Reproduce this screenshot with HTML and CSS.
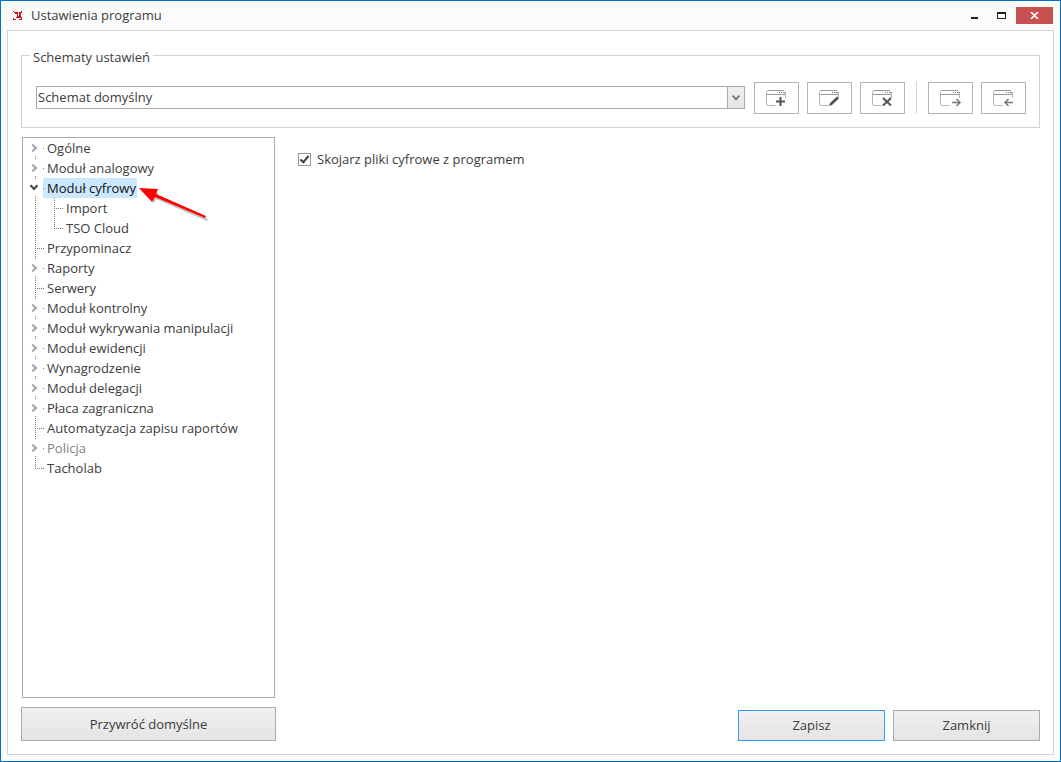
FILE: index.html
```html
<!DOCTYPE html>
<html lang="pl">
<head>
  <meta charset="utf-8">
  <title>Ustawienia programu</title>
  <link rel="stylesheet" href="styles.css">
</head>
<body>
  <!-- window frame shape shared by the toolbar icons -->
  <svg class="defs" width="0" height="0" aria-hidden="true">
    <symbol id="frame" viewBox="0 0 22 18">
      <path d="M9.500 16.500H2.500Q0.500 16.500 0.500 14.500V3.500Q0.500 1.500 2.500 1.500H18M19.500 3V9" fill="none" stroke="#b4b4b4"/>
      <path d="M1 5.500H19M2 1.500H18" stroke="#999"/>
      <path d="M13 3.500h1M15 3.500h1M17 3.500h2" stroke="#777"/>
    </symbol>
  </svg>

  <div class="window">
    <header class="titlebar">
      <svg class="logo" width="10" height="10" viewBox="0 0 10 10" aria-hidden="true">
        <path d="M1 1h4v4h1V1h3v1H8v4h1v1H3V6h1V3H2V2H1zM0 0h1v1H0zM8 0h1v1H8zM0 7h1v1h2v1H0zM6 8h2V7h1v2H6z" fill="#d0101c"/>
      </svg>
      <h1>Ustawienia programu</h1>
      <div class="window-buttons">
        <button type="button" aria-label="Minimalizuj">
          <svg width="9" height="9" viewBox="0 0 9 9"><path d="M1 6h7v2H1z" fill="#222"/></svg>
        </button>
        <button type="button" aria-label="Maksymalizuj">
          <svg width="9" height="7" viewBox="0 0 9 7"><path d="M0 0h9v7H0zM1 2v4h7V2z" fill="#222" fill-rule="evenodd"/></svg>
        </button>
        <button type="button" class="close" aria-label="Zamknij okno">
          <svg width="9" height="7" viewBox="0 0 9 7"><path d="M1 0l7 7M8 0L1 7" stroke="#fff" stroke-width="1.700"/></svg>
        </button>
      </div>
    </header>

    <main class="panel">
      <fieldset class="schemes">
        <legend>Schematy ustawień</legend>
        <div class="toolbar">
          <div class="combo">
            <select aria-label="Schemat">
              <option>Schemat domyślny</option>
            </select>
            <svg class="combo-arrow" width="17" height="21" viewBox="0 0 17 21" aria-hidden="true"><path d="M5 8.500l3.500 4 3.500-4" fill="none" stroke="#777" stroke-width="2"/></svg>
          </div>
          <button type="button" aria-label="Dodaj schemat">
            <svg width="22" height="18"><use href="#frame"/><path d="M10 12.500h9M14.500 8v9" stroke="#555" stroke-width="2"/></svg>
          </button>
          <button type="button" aria-label="Edytuj schemat">
            <svg width="22" height="18"><use href="#frame"/><path d="M10 17l1-3 7-6.500 2 2-7 6.500z" fill="#555"/></svg>
          </button>
          <button type="button" aria-label="Usuń schemat">
            <svg width="22" height="18"><use href="#frame"/><path d="M11 9l8 7.500M19 9l-8 7.500" stroke="#555" stroke-width="2"/></svg>
          </button>
          <span class="separator"></span>
          <button type="button" aria-label="Eksportuj schemat">
            <svg width="22" height="18"><use href="#frame"/><path d="M12 13.500h8M16.500 10l3.500 3.500-3.500 3.500" fill="none" stroke="#777" stroke-width="1.500"/></svg>
          </button>
          <button type="button" aria-label="Importuj schemat">
            <svg width="22" height="18"><use href="#frame"/><path d="M12 13.500h8M15.500 10L12 13.500l3.500 3.500" fill="none" stroke="#777" stroke-width="1.500"/></svg>
          </button>
        </div>
      </fieldset>

      <div class="columns">
        <nav class="sidebar">
          <ul class="tree">
            <li><button type="button" class="toggle" aria-label="Rozwiń"></button><a href="#">Ogólne</a></li>
            <li><button type="button" class="toggle" aria-label="Rozwiń"></button><a href="#">Moduł analogowy</a></li>
            <li>
              <button type="button" class="toggle open" aria-label="Zwiń"></button><a href="#" class="selected">Moduł cyfrowy</a>
              <ul>
                <li><a href="#">Import</a></li>
                <li><a href="#">TSO Cloud</a></li>
              </ul>
              <svg class="pointer" width="74" height="40" viewBox="0 0 74 40" aria-hidden="true">
                <path d="M3 10L21 13 19 17 70 39 69 41 18 19 16 23z" fill="#000" opacity="0.25"/>
                <path d="M1 8L20 9 18 14 68 36 67 38 17 17 14 22z" fill="#f00"/>
              </svg>
            </li>
            <li><a href="#">Przypominacz</a></li>
            <li><button type="button" class="toggle" aria-label="Rozwiń"></button><a href="#">Raporty</a></li>
            <li><a href="#">Serwery</a></li>
            <li><button type="button" class="toggle" aria-label="Rozwiń"></button><a href="#">Moduł kontrolny</a></li>
            <li><button type="button" class="toggle" aria-label="Rozwiń"></button><a href="#">Moduł wykrywania manipulacji</a></li>
            <li><button type="button" class="toggle" aria-label="Rozwiń"></button><a href="#">Moduł ewidencji</a></li>
            <li><button type="button" class="toggle" aria-label="Rozwiń"></button><a href="#">Wynagrodzenie</a></li>
            <li><button type="button" class="toggle" aria-label="Rozwiń"></button><a href="#">Moduł delegacji</a></li>
            <li><button type="button" class="toggle" aria-label="Rozwiń"></button><a href="#">Płaca zagraniczna</a></li>
            <li><a href="#">Automatyzacja zapisu raportów</a></li>
            <li><button type="button" class="toggle" aria-label="Rozwiń"></button><a href="#" class="muted">Policja</a></li>
            <li><a href="#">Tacholab</a></li>
          </ul>
          <button type="button" class="btn restore">Przywróć domyślne</button>
        </nav>

        <section class="content">
          <label class="check"><input type="checkbox" checked>Skojarz pliki cyfrowe z programem</label>
          <div class="actions">
            <button type="button" class="btn primary">Zapisz</button>
            <button type="button" class="btn">Zamknij</button>
          </div>
        </section>
      </div>
    </main>
  </div>
</body>
</html>
```
FILE: styles.css
```css
* {
  box-sizing: border-box;
}

body {
  margin: 0;
  font-family: "Open Sans", "Noto Sans", sans-serif;
  font-size: 13px;
  line-height: 20px;
  color: #3c3c3c;
}

button,
select {
  font: inherit;
  color: inherit;
}

svg {
  display: block;
}

.defs {
  position: absolute;
}

.window {
  display: flex;
  flex-direction: column;
  min-height: 100vh;
  padding: 0 6px 6px;
  border: 1px solid #0072c6;
  background: #fbfbfb;
}

/* title bar */
.titlebar {
  display: flex;
  align-items: center;
  height: 29px;
  padding: 0 1px 0 6px;
}

.titlebar h1 {
  margin: 0 0 0 8px;
  padding-bottom: 2px;
  font-size: 13px;
  font-weight: normal;
}

.window-buttons {
  display: flex;
  margin-left: auto;
}

.window-buttons button {
  display: flex;
  align-items: center;
  justify-content: center;
  width: 27px;
  height: 17px;
  padding: 0;
  border: 0;
  background: none;
}

.window-buttons .close {
  width: 37px;
  margin-left: 1px;
  background: #c75050;
}

/* main panel */
.panel {
  display: flex;
  flex: 1;
  flex-direction: column;
  padding: 12px 13px 13px;
  border: 1px solid #d4d4d4;
  background: #fff;
}

.schemes {
  min-width: 0;
  margin: 0;
  padding: 15px 13px 13px 14px;
  border: 1px solid #d4d4d4;
}

.schemes legend {
  margin-left: -6px;
  padding: 4px 3px 0;
}

.toolbar {
  display: flex;
  align-items: center;
  gap: 8px;
}

.combo {
  position: relative;
  flex: 1;
  margin: 0 1px 2px 0;
}

.combo select {
  display: block;
  width: 100%;
  height: 23px;
  padding: 0 20px 0 1px;
  border: 1px solid #ababab;
  border-radius: 0;
  background: #fff;
  appearance: none;
}

.combo-arrow {
  position: absolute;
  top: 1px;
  right: 1px;
  border-left: 1px solid #ababab;
  background: linear-gradient(#f0f0f0, #e4e4e4);
  pointer-events: none;
}

.toolbar button {
  display: flex;
  align-items: center;
  justify-content: center;
  width: 45px;
  height: 32px;
  padding: 0;
  border: 1px solid #b4b4b4;
  background: #fff;
}

.separator {
  width: 1px;
  height: 32px;
  margin: 0 3px;
  background: #d4d4d4;
}

.columns {
  display: flex;
  flex: 1;
  gap: 22px;
  margin-top: 9px;
}

.sidebar {
  display: flex;
  flex-direction: column;
  width: 255px;
}

/* settings tree */
.tree {
  flex: 1;
  margin: 0 1px 9px;
  padding: 0 0 0 6px;
  border: 1px solid #ababab;
}

.tree ul {
  margin: 0 0 0 -14px;
  padding: 0 0 0 19px;
}

.tree li {
  position: relative;
  padding-left: 14px;
  list-style: none;
}

.tree li::before {
  content: "";
  position: absolute;
  top: 0;
  left: 6px;
  width: 1px;
  height: 100%;
  background: repeating-linear-gradient(#777 0 1px, transparent 1px 2px);
}

.tree li:last-child::before {
  height: 10px;
}

.tree li::after {
  content: "";
  position: absolute;
  top: 10px;
  left: 6px;
  width: 9px;
  height: 1px;
  background: repeating-linear-gradient(90deg, #777 0 1px, transparent 1px 2px);
}

.tree > li:first-child::before {
  top: 10px;
  height: 10px;
}

.tree a {
  display: block;
  width: fit-content;
  padding: 0 4px;
  color: inherit;
  text-decoration: none;
}

.tree .selected {
  padding-right: 1px;
  background: #cce8ff;
  color: #111;
}

.tree .muted {
  color: #808080;
}

.toggle {
  position: absolute;
  z-index: 1;
  top: 2px;
  left: 0;
  width: 14px;
  height: 16px;
  padding: 0;
  border: 0;
  background: #fff;
}

.toggle::before {
  content: "";
  position: absolute;
  top: 5px;
  left: 1px;
  width: 6px;
  height: 6px;
  border: solid #a6a6a6;
  border-width: 2px 2px 0 0;
  box-sizing: border-box;
  transform: rotate(45deg);
}

.toggle.open::before {
  top: 3px;
  left: 2px;
  border-color: #444;
  transform: rotate(135deg);
}

.pointer {
  position: absolute;
  z-index: 2;
  top: 2px;
  left: 109px;
  overflow: visible;
}

/* buttons */
.btn {
  height: 31px;
  padding: 0 0 2px;
  border: 1px solid #ababab;
  background: linear-gradient(#f0f0f0, #e4e4e4);
}

.btn.primary {
  border-color: #3399ff;
}

.restore {
  height: 34px;
  padding: 0;
}

.content {
  display: flex;
  flex: 1;
  flex-direction: column;
  justify-content: space-between;
  padding-top: 12px;
}

.check {
  display: flex;
  align-items: center;
  gap: 6px;
}

.check input {
  width: 13px;
  height: 13px;
  margin: 0;
  border: 1px solid #999;
  background: #fff;
  appearance: none;
}

.check input:checked::before {
  content: "";
  display: block;
  box-sizing: border-box;
  width: 9px;
  height: 5px;
  margin: 2px 1px;
  border: solid #3c3c3c;
  border-width: 0 0 2px 2px;
  transform: rotate(-50deg);
}

.actions {
  display: flex;
  justify-content: flex-end;
  gap: 8px;
}

.actions .btn {
  width: 147px;
}
```
